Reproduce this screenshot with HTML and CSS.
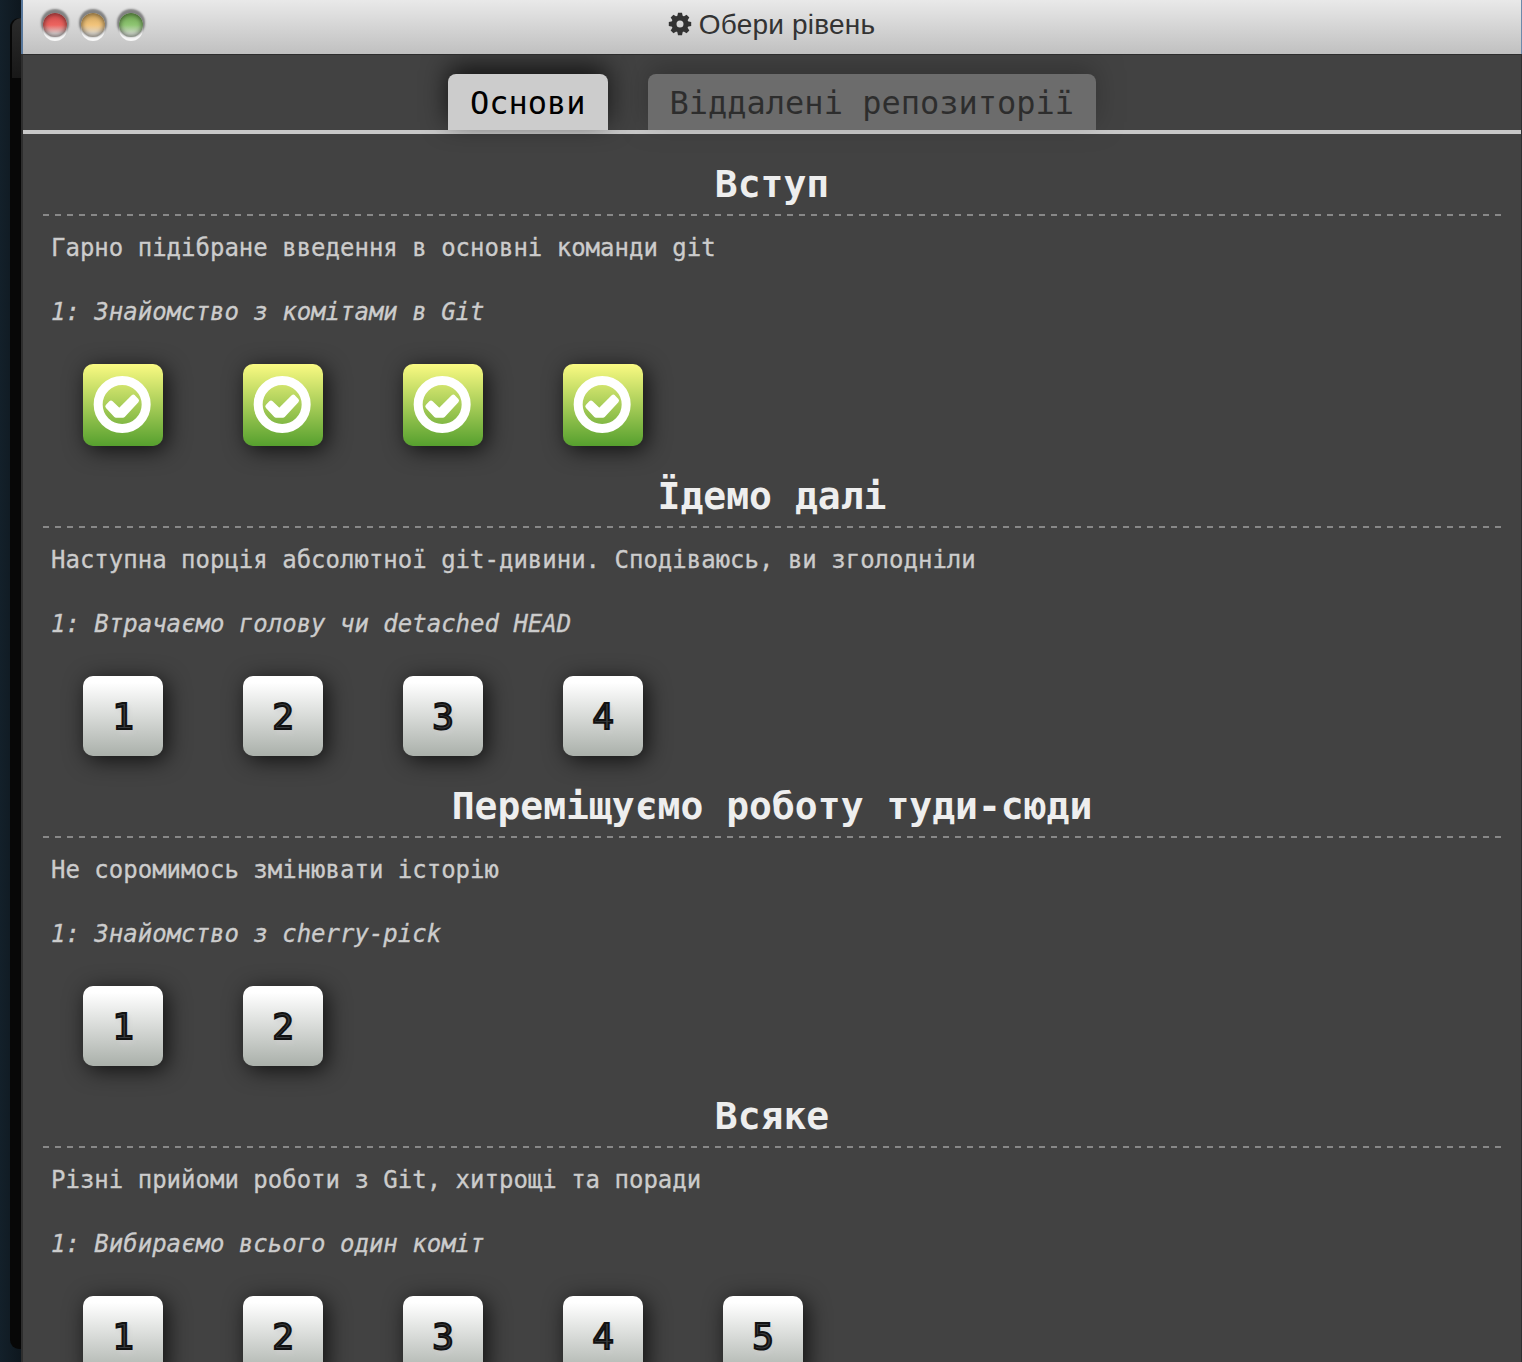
FILE: index.html
```
<!DOCTYPE html>
<html lang="uk">
<head>
<meta charset="utf-8">
<title>Обери рівень</title>
<link rel="stylesheet" href="styles.css">
</head>
<body>
<svg width="0" height="0" class="defs" aria-hidden="true">
  <symbol id="solved" viewBox="0 0 240 246">
    <circle cx="117.500" cy="121.500" r="72" fill="none" stroke="#fff" stroke-width="27"/>
    <path d="M74 127L84 117L109 141L151 99L161 110L120 154L99 154Z" fill="#fff" stroke="#fff" stroke-width="14" stroke-linejoin="round"/>
  </symbol>
</svg>
<div class="desktop">
  <div class="behind"><div class="terminal"><div class="terminal-bar"></div></div></div>
  <main class="window">
    <header class="titlebar">
      <div class="lights"><span class="light red"></span><span class="light yellow"></span><span class="light green"></span></div>
      <div class="title">
        <svg class="gear" viewBox="-12 -12 24 24"><g fill="#333"><path fill-rule="evenodd" d="M0-8.500A8.500 8.500 0 1 1 0 8.500A8.500 8.500 0 1 1 0-8.500ZM0-3.500A3.500 3.500 0 1 0 0 3.500A3.500 3.500 0 1 0 0-3.500Z"/><path id="tooth" d="M-2.800-7.500L-2-11.200H2L2.800-7.500Z"/><use href="#tooth" transform="rotate(45)"/><use href="#tooth" transform="rotate(90)"/><use href="#tooth" transform="rotate(135)"/><use href="#tooth" transform="rotate(180)"/><use href="#tooth" transform="rotate(225)"/><use href="#tooth" transform="rotate(270)"/><use href="#tooth" transform="rotate(315)"/></g></svg>
        <span>Обери рівень</span>
      </div>
    </header>
    <nav class="tabs"><div class="tab active">Основи</div><div class="tab">Віддалені репозиторії</div></nav>
    <div class="levels">
      <section class="series">
        <h2>Вступ</h2>
        <p class="about">Гарно підібране введення в основні команди git</p>
        <p class="level-name">1: Знайомство з комітами в Git</p>
        <div class="icons">
          <div class="level done"><svg><use href="#solved"/></svg></div>
          <div class="level done"><svg><use href="#solved"/></svg></div>
          <div class="level done"><svg><use href="#solved"/></svg></div>
          <div class="level done"><svg><use href="#solved"/></svg></div>
        </div>
      </section>
      <section class="series">
        <h2>Їдемо далі</h2>
        <p class="about">Наступна порція абсолютної git-дивини. Сподіваюсь, ви зголодніли</p>
        <p class="level-name">1: Втрачаємо голову чи detached HEAD</p>
        <div class="icons"><div class="level">1</div><div class="level">2</div><div class="level">3</div><div class="level">4</div></div>
      </section>
      <section class="series">
        <h2>Переміщуємо роботу туди-сюди</h2>
        <p class="about">Не соромимось змінювати історію</p>
        <p class="level-name">1: Знайомство з cherry-pick</p>
        <div class="icons"><div class="level">1</div><div class="level">2</div></div>
      </section>
      <section class="series">
        <h2>Всяке</h2>
        <p class="about">Різні прийоми роботи з Git, хитрощі та поради</p>
        <p class="level-name">1: Вибираємо всього один коміт</p>
        <div class="icons"><div class="level">1</div><div class="level">2</div><div class="level">3</div><div class="level">4</div><div class="level">5</div></div>
      </section>
    </div>
  </main>
</div>
</body>
</html>
```
FILE: styles.css
```
* { box-sizing: border-box; }
body { margin: 0; height: 1362px; overflow: hidden; background: #111b23; }
.defs { position: absolute; }
.desktop { display: flex; height: 1362px; }
.behind { width: 21px; padding: 18px 0 13px 10px; background: linear-gradient(90deg, #13202a, #0e171e); }
.terminal { height: 100%; background: #070707; border-radius: 9px 0 0 9px; overflow: hidden; }
.terminal-bar { height: 60px; margin-left: 2px; background: linear-gradient(#2a2a2a, #181818); border-radius: 9px 0 0 0; }
.window {
  flex: 1;
  min-width: 0;
  height: 1362px;
  overflow: hidden;
  padding: 0 1px 0 2px;
  background:
    linear-gradient(#58779b 54px, #2e2e2e 54px) left / 2px 100% no-repeat,
    linear-gradient(#6c89aa 54px, #2e2e31 54px) right / 1px 100% no-repeat,
    #424242;
  font-family: "DejaVu Sans Mono", "Liberation Mono", monospace;
}
.titlebar {
  position: relative;
  z-index: 1;
  display: grid;
  grid-template-columns: 1fr auto 1fr;
  align-items: center;
  height: 55px;
  padding: 0 0 5px;
  border-bottom: 1px solid #2d2d2d;
  background: linear-gradient(#e9e9e9, #c0c0c0);
}
.lights { display: flex; gap: 14px; padding-left: 20px; }
.light { width: 24px; height: 24px; border-radius: 50%; box-shadow: inset 0 0 5px 1px rgba(0,0,0,.5), 0 -2px 2px 2px rgba(0,0,0,.42), 0 4px 0 0 #f7f7f7; }
.red { background: linear-gradient(#d54f4f 10%, #ed645f 50%, #d9cccc 85%); }
.yellow { background: linear-gradient(#d5aa62 10%, #f2c47b 50%, #ddd7cc 85%); }
.green { background: linear-gradient(#73a955 10%, #8fc673 50%, #ced9c9 85%); }
.title { display: flex; align-items: center; gap: 7px; font: 28px/40px "Liberation Sans", Arial, sans-serif; letter-spacing: .2px; color: #333; }
.gear { width: 24px; height: 24px; margin: -2px 0 0 -1px; }
.tabs { display: flex; justify-content: center; gap: 40px; height: 79px; padding-top: 19px; border-bottom: 4px solid #c8c8c8; }
.tab {
  height: 56px;
  padding: 0 22px;
  border-radius: 8px 8px 0 0;
  background: #ccc;
  box-shadow: 0 -8px 26px rgba(0,0,0,.7);
  font-size: 32px;
  line-height: 58px;
  color: #000;
  opacity: .3;
}
.tab.active { opacity: 1; }
.levels { padding: 26px 20px 0; }
.series { padding-bottom: 26px; }
h2 {
  height: 56px;
  margin: 0;
  padding-bottom: 2px;
  background: repeating-linear-gradient(90deg, #888 0 6px, transparent 6px 12px) left bottom / 100% 2px no-repeat;
  font-size: 38px;
  line-height: 49px;
  text-align: center;
  color: #eee;
}
p { margin: 0; padding-left: 8px; font-size: 24px; line-height: 32px; color: #ccc; -webkit-text-stroke: .3px #ccc; }
.about { margin-top: 16px; }
.level-name { margin-top: 32px; font-style: italic; }
.icons { display: flex; gap: 80px; margin: 36px 0 0 40px; }
.level {
  width: 80px;
  height: 80px;
  border-radius: 10px;
  background: linear-gradient(#fff 8%, #aab0aa);
  box-shadow: 4px 4px 22px rgba(0,0,0,.75);
  font-size: 36px;
  line-height: 82px;
  text-align: center;
  color: #3a3d3f;
  -webkit-text-stroke: 2px #111;
  text-shadow: 2px 4px 4px #ccc;
}
.done { height: 82px; background: linear-gradient(#fafa82, #56a02e); }
.done svg { display: block; width: 80px; height: 82px; }
```
